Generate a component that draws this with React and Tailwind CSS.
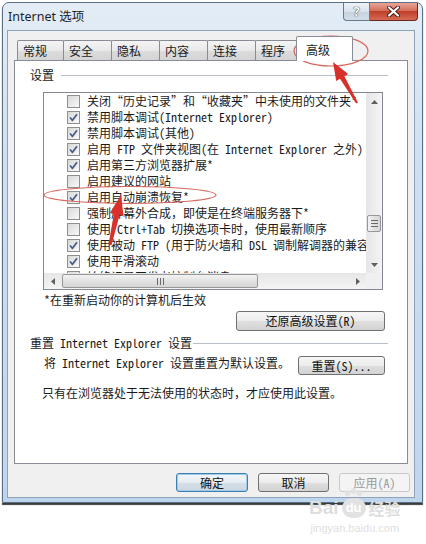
import React from 'react';

const ROWS = [
  [false, '关闭“历史记录”和“收藏夹”中未使用的文件夹*'],
  [true, '禁用脚本调试(Internet Explorer)'],
  [true, '禁用脚本调试(其他)'],
  [true, '启用 FTP 文件夹视图(在 Internet Explorer 之外)'],
  [true, '启用第三方浏览器扩展*'],
  [false, '启用建议的网站'],
  [true, '启用自动崩溃恢复*'],
  [false, '强制屏幕外合成，即使是在终端服务器下*'],
  [false, '使用 Ctrl+Tab 切换选项卡时，使用最新顺序'],
  [true, '使用被动 FTP (用于防火墙和 DSL 调制解调器的兼容性)'],
  [true, '使用平滑滚动'],
  [false, '始终记录开发者控制台消息'],
];

const TABS = [
  ['常规', 'w-[47px]'],
  ['安全', 'w-[49px] -ml-px'],
  ['隐私', 'w-[49px] -ml-px'],
  ['内容', 'w-[49px] -ml-px'],
  ['连接', 'w-[49px] -ml-px'],
  ['程序', 'w-[44px] -ml-px'],
];

function Check({ checked }) {
  return (
    <span className="w-[13px] h-[13px] shrink-0 border border-[#8f8f8f] bg-[linear-gradient(135deg,#d9d9d9,#f9f9f9)] flex items-center justify-center">
      {checked && (
        <svg width="11" height="11" viewBox="0 0 11 11">
          <path d="M2 5.5 L4.5 8.3 L9 2.3" fill="none" stroke="#4b5f86" strokeWidth="1.8" strokeLinejoin="round" />
        </svg>
      )}
    </span>
  );
}

function Tri({ dir }) {
  const pts = {
    up: '0,4 3.5,0 7,4',
    down: '0,0 3.5,4 7,0',
    left: '4,0 0,3.5 4,7',
    right: '0,0 4,3.5 0,7',
  }[dir];
  const w = dir === 'up' || dir === 'down' ? 7 : 4;
  const h = dir === 'up' || dir === 'down' ? 4 : 7;
  return (
    <svg width={w} height={h} viewBox={`0 0 ${w} ${h}`}>
      <polygon points={pts} fill="#606060" />
    </svg>
  );
}

const btnBase =
  'h-[19px] rounded-[3px] border flex items-center justify-center text-[12px] leading-none';
const btnNormal =
  'border-[#707070] bg-[linear-gradient(to_bottom,#f6f6f6_0%,#ececec_50%,#dfdfdf_51%,#d2d2d2_100%)] text-[#111]';

export default function App() {
  return (
    <div className="relative w-[426px] h-[544px] bg-white overflow-hidden font-['Noto_Sans_Mono_CJK_SC','Noto_Sans_CJK_SC',sans-serif] text-[#1a1a1a]">
      {/* window */}
      <div className="ml-[2px] mt-[2px] w-[421px] h-[501px] rounded-t-[7px] border border-[#5a6e84] bg-[linear-gradient(to_bottom,#e4edf6,#cfe0f1_30%,#bed6ed)] shadow-[0_2px_1px_#3c3c3c] flex flex-col pl-[4px] pr-[7px]">
        {/* title bar */}
        <div className="h-[27px] flex items-start justify-between">
          <div className="pt-[6px] pl-[1px] text-[12.5px] leading-[16px] font-['Noto_Sans','Noto_Sans_CJK_SC',sans-serif] text-[#1e1e1e]">
            Internet 选项
          </div>
          <div className="flex -mr-[3px]">
            <div className="w-[27px] h-[18px] border border-t-0 border-[#6a7a8d] rounded-bl-[4px] bg-[linear-gradient(to_bottom,#eef2f7,#d9e2ec_50%,#c6d2df_51%,#d3dde8)] flex items-center justify-center text-[13px] font-bold leading-none text-white font-['Noto_Sans',sans-serif] [text-shadow:0_0_1px_#2a3440,0_0_1px_#2a3440]">
              ?
            </div>
            <div className="w-[48px] h-[18px] border border-t-0 border-l-0 border-[#6b261e] rounded-br-[4px] bg-[linear-gradient(to_bottom,#e8a497,#d4705d_45%,#c0402b_50%,#d56a54)] flex items-center justify-center">
              <svg width="13" height="11" viewBox="0 0 13 11">
                <path d="M2 1.5 L11 9.5 M11 1.5 L2 9.5" stroke="#4a1a14" strokeWidth="4" strokeLinecap="round" />
                <path d="M2 1.5 L11 9.5 M11 1.5 L2 9.5" stroke="#ffffff" strokeWidth="2.2" strokeLinecap="round" />
              </svg>
            </div>
          </div>
        </div>

        {/* client area */}
        <div className="w-[408px] h-[468px] bg-[#f0f0f0] border border-[#8ea3b8] flex flex-col">
          {/* tab strip */}
          <div className="h-[29px] flex items-end pl-[9px] font-['Noto_Sans_CJK_SC',sans-serif]">
            {TABS.map(([t, w]) => (
              <div
                key={t}
                className={`${w} h-[20px] border border-b-0 border-[#898c95] rounded-t-[2px] bg-[linear-gradient(to_bottom,#f4f4f4,#e9e9e9_50%,#dcdcdc_51%,#d4d4d4)] flex items-center pl-[5px] text-[12px] leading-none`}
              >
                {t}
              </div>
            ))}
            <div className="w-[57px] h-[25px] -ml-[3px] -mb-px relative z-10 border border-b-0 border-[#898c95] rounded-t-[2px] bg-white flex items-center pl-[9px] pt-[1px] text-[12px] leading-none">
              高级
            </div>
          </div>

          {/* tab panel */}
          <div className="ml-[6px] w-[394px] h-[404px] border border-[#898c95] bg-white flex flex-col pl-[15px] text-[12px] leading-[16px]">
            {/* group header */}
            <div className="mt-[6px] h-[16px] flex items-center mr-[19px]">
              <span className="font-['Noto_Sans_CJK_SC',sans-serif]">设置</span>
              <span className="flex-1 h-px bg-[#b8bfc7] ml-[7px]" />
            </div>

            {/* listbox */}
            <div className="mt-[9px] ml-[13px] w-[340px] h-[198px] border border-[#828790] bg-white grid grid-cols-[322px_16px] grid-rows-[180px_16px]">
              <div className="overflow-hidden">
                {ROWS.map(([c, t], i) => (
                  <div key={i} className="h-[16px] flex items-center pl-[23px] gap-[7px] whitespace-nowrap">
                    <Check checked={c} />
                    <span>{t}</span>
                  </div>
                ))}
              </div>
              {/* vertical scrollbar */}
              <div className="flex flex-col bg-[linear-gradient(to_right,#e6e6e6,#f4f4f4)]">
                <div className="h-[17px] flex items-center justify-center">
                  <Tri dir="up" />
                </div>
                <div className="h-[105px]" />
                <div className="h-[17px] mx-[1px] rounded-[2px] border border-[#979797] bg-[linear-gradient(to_right,#f3f3f3,#e2e2e2_50%,#d6d6d6)] flex flex-col items-center justify-center gap-[2px]">
                  <span className="w-[7px] h-px bg-[#6a6a6a]" />
                  <span className="w-[7px] h-px bg-[#6a6a6a]" />
                  <span className="w-[7px] h-px bg-[#6a6a6a]" />
                </div>
                <div className="flex-1" />
                <div className="h-[17px] flex items-center justify-center">
                  <Tri dir="down" />
                </div>
              </div>
              {/* horizontal scrollbar */}
              <div className="flex bg-[linear-gradient(to_bottom,#e6e6e6,#f4f4f4)]">
                <div className="w-[17px] flex items-center justify-center">
                  <Tri dir="left" />
                </div>
                <div className="w-[196px] my-[1px] ml-px rounded-[2px] border border-[#979797] bg-[linear-gradient(to_bottom,#f3f3f3,#e2e2e2_50%,#d6d6d6)] flex items-center justify-center gap-[2px]">
                  <span className="w-px h-[7px] bg-[#6a6a6a]" />
                  <span className="w-px h-[7px] bg-[#6a6a6a]" />
                  <span className="w-px h-[7px] bg-[#6a6a6a]" />
                </div>
                <div className="flex-1" />
                <div className="w-[17px] flex items-center justify-center">
                  <Tri dir="right" />
                </div>
              </div>
              <div className="bg-[#f0f0f0]" />
            </div>

            <div className="mt-[2px] ml-[14px] h-[16px] flex items-center whitespace-nowrap">*在重新启动你的计算机后生效</div>

            <div className={`${btnBase} ${btnNormal} mt-[3px] ml-[206px] w-[149px] h-[20px]`}>还原高级设置(R)</div>

            <div className="mt-[4px] h-[16px] flex items-center mr-[19px] whitespace-nowrap">
              <span>重置 Internet Explorer 设置</span>
              <span className="flex-1 h-px bg-[#b8bfc7] ml-[1px]" />
            </div>

            <div className="mt-[5px] h-[19px] flex items-center">
              <span className="ml-[14px] mb-[6px] whitespace-nowrap">将 Internet Explorer 设置重置为默认设置。</span>
              <div className={`${btnBase} ${btnNormal} ml-auto mr-[22px] w-[87px]`}>重置(S)...</div>
            </div>

            <div className="mt-[10px] ml-[12px] h-[16px] flex items-center whitespace-nowrap">
              只有在浏览器处于无法使用的状态时，才应使用此设置。
            </div>
          </div>

          {/* dialog buttons */}
          <div className="mt-[9px] flex justify-end gap-[10px] pr-[4px]">
            <div className={`${btnBase} w-[72px] border-[#3c7fb1] bg-[linear-gradient(to_bottom,#f2f6f9,#e6edf2_50%,#d6e0e8_51%,#cbd7e1)] shadow-[inset_0_0_0_1px_#9fcbe8] text-[#111]`}>
              确定
            </div>
            <div className={`${btnBase} ${btnNormal} w-[71px]`}>取消</div>
            <div className={`${btnBase} w-[71px] border-[#c9c9c9] bg-[#f4f4f4] text-[#9a9a9a]`}>应用(A)</div>
          </div>
        </div>
      </div>

      {/* Baidu watermark */}
      <div className="absolute left-[309px] top-[486px] flex flex-col items-center text-[#dedede] pointer-events-none">
        <div className="flex items-end h-[32px]">
          <span className="text-[19px] font-bold leading-[20px] font-['Liberation_Sans',sans-serif]">Bai</span>
          <span className="relative w-[26px] h-[30px] mx-[2px] flex items-end justify-center">
            <span className="absolute top-[2px] left-[4px] w-[5px] h-[6px] rounded-full bg-[#e2e2e2]" />
            <span className="absolute top-0 left-[10px] w-[5px] h-[6px] rounded-full bg-[#e2e2e2]" />
            <span className="absolute top-[2px] left-[16px] w-[5px] h-[6px] rounded-full bg-[#e2e2e2]" />
            <span className="w-[24px] h-[20px] rounded-[10px] bg-[#e2e2e2] text-white text-[13px] font-bold leading-[20px] text-center font-['Liberation_Sans',sans-serif]">du</span>
          </span>
          <span className="text-[16px] font-bold leading-[20px] font-['Noto_Sans_CJK_SC',sans-serif]">经验</span>
        </div>
        <div className="text-[11px] leading-[14px] mt-[3px] font-['Liberation_Sans',sans-serif] text-[#e0e0e0]">jingyan.baidu.com</div>
      </div>

      {/* red annotations */}
      <svg className="absolute left-0 top-0 pointer-events-none" width="426" height="544" viewBox="0 0 426 544">
        <ellipse cx="331" cy="51" rx="37" ry="15" fill="none" stroke="#d8675e" strokeWidth="1.2" />
        <ellipse cx="130" cy="195" rx="86" ry="8.5" fill="none" stroke="#d8675e" strokeWidth="1.2" />
        <polygon points="333,62 348.2,73.9 344.4,76.2 357.9,102.5 356.1,103.5 340,78.8 336.2,81.1" fill="#d8302a" />
        <polygon points="121,195 123.5,216 119.6,215.1 111.5,245.3 108.5,244.7 113.8,213.9 109.9,213" fill="#d8302a" />
      </svg>
    </div>
  );
}
